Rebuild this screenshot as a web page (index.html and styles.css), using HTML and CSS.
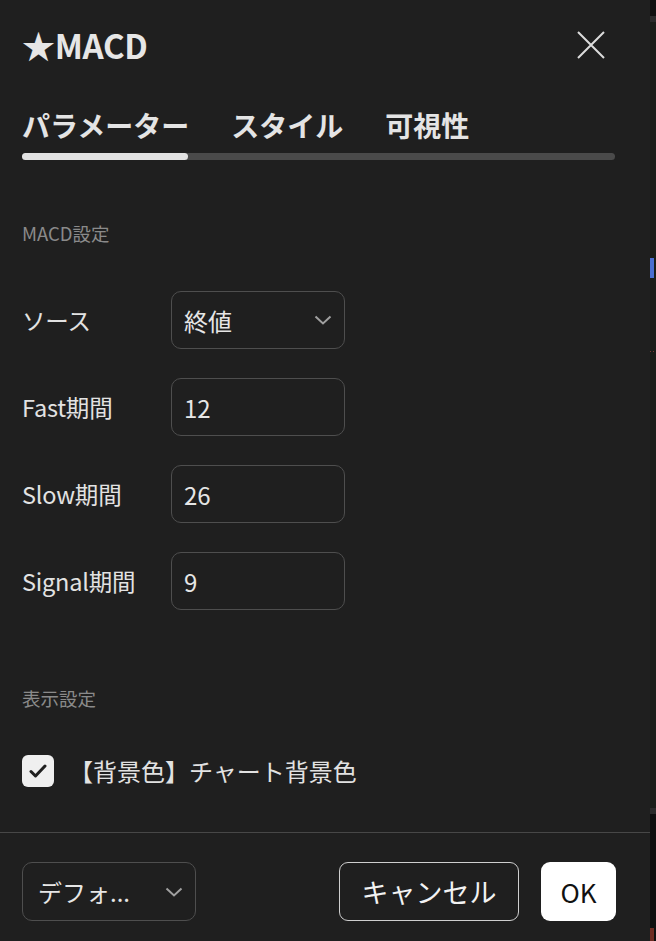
FILE: index.html
```html
<!DOCTYPE html>
<html lang="ja">
<head>
<meta charset="utf-8">
<title>MACD</title>
<link rel="stylesheet" href="styles.css">
</head>
<body>
<div class="dialog">
  <div class="main">
    <header class="header">
      <h1 class="title">★MACD</h1>
      <button class="close" aria-label="閉じる">
        <svg width="30" height="30" viewBox="0 0 30 30"><path d="M2 2 L28 28 M28 2 L2 28" stroke="#dcdcdc" stroke-width="2" fill="none"/></svg>
      </button>
    </header>
    <nav class="tabs">
      <span class="tab">パラメーター</span>
      <span class="tab">スタイル</span>
      <span class="tab">可視性</span>
    </nav>
    <div class="track"><div class="track-fill"></div></div>

    <div class="section-label">MACD設定</div>
    <div class="rows">
      <div class="row">
        <span class="label">ソース</span>
        <div class="field select"><span>終値</span>
          <svg class="chev" width="18" height="10" viewBox="0 0 18 10"><path d="M1.5 1.5 L9 8.5 L16.5 1.5" stroke="#a0a0a0" stroke-width="2" fill="none"/></svg>
        </div>
      </div>
      <div class="row">
        <span class="label">Fast期間</span>
        <div class="field">12</div>
      </div>
      <div class="row">
        <span class="label">Slow期間</span>
        <div class="field">26</div>
      </div>
      <div class="row">
        <span class="label">Signal期間</span>
        <div class="field">9</div>
      </div>
    </div>

    <div class="section-label second">表示設定</div>
    <div class="check-row">
      <span class="checkbox">
        <svg width="18" height="14" viewBox="0 0 18 14"><path d="M2 7.5 L6.5 12 L16 2" stroke="#1f1f1f" stroke-width="3" fill="none" stroke-linecap="round" stroke-linejoin="round"/></svg>
      </span>
      <span class="check-label">【背景色】チャート背景色</span>
    </div>
  </div>
  <div class="divider"></div>
  <footer class="footer">
    <div class="field select preset"><span>デフォ...</span>
      <svg class="chev" width="18" height="10" viewBox="0 0 18 10"><path d="M1.5 1.5 L9 8.5 L16.5 1.5" stroke="#a0a0a0" stroke-width="2" fill="none"/></svg>
    </div>
    <div class="actions">
      <button class="btn cancel">キャンセル</button>
      <button class="btn ok">OK</button>
    </div>
  </footer>
</div>
<div class="edge">
  <div class="e-top"></div>
  <div class="e-band"></div>
  <div class="e-chart">
    <div class="e-blue"></div>
    <div class="e-dots"></div>
  </div>
  <div class="e-band"></div>
  <div class="e-bottom"><div class="e-red"></div></div>
</div>
</body>
</html>
```

FILE: styles.css
```css
* { box-sizing: border-box; }
html, body { margin: 0; padding: 0; }
body {
  display: flex;
  width: 656px;
  height: 941px;
  overflow: hidden;
  background: #1f1f1f;
  font-family: "Noto Sans CJK JP", "Noto Sans", sans-serif;
  color: #e2e2e2;
}
.dialog {
  width: 650px;
  height: 941px;
  background: #1f1f1f;
  display: flex;
  flex-direction: column;
}
.main {
  padding: 0 35px 0 22px;
}
.header {
  height: 90px;
  display: flex;
  align-items: center;
  justify-content: space-between;
}
.title {
  margin: 0;
  font-size: 33px;
  font-weight: 700;
  line-height: 40px;
  color: #e6e6e6;
  letter-spacing: -0.3px;
}
.close {
  width: 30px;
  height: 30px;
  padding: 0;
  margin-right: 9px;
  border: none;
  background: none;
  display: flex;
}
.tabs {
  margin-top: 17px;
  display: flex;
  gap: 42px;
  height: 36px;
  align-items: center;
}
.tab {
  font-size: 28px;
  font-weight: 700;
  line-height: 36px;
  color: #e4e4e4;
}
.track {
  margin-top: 10px;
  height: 7px;
  border-radius: 4px;
  background: #4a4a4a;
}
.track-fill {
  width: 166px;
  height: 7px;
  border-radius: 4px;
  background: #e2e2e2;
}
.section-label {
  margin-top: 61px;
  font-size: 18.5px;
  line-height: 24px;
  color: #8a8a8a;
}
.section-label.second {
  margin-top: 76px;
}
.rows {
  margin-top: 46px;
  display: flex;
  flex-direction: column;
  gap: 29px;
}
.row {
  display: flex;
  align-items: center;
  height: 58px;
}
.label {
  width: 149px;
  font-size: 23.5px;
  line-height: 30px;
  color: #e2e2e2;
  letter-spacing: -0.2px;
}
.field {
  width: 174px;
  height: 58px;
  border: 1px solid #4e4e4e;
  border-radius: 10px;
  padding: 0 12px 0 12px;
  display: flex;
  align-items: center;
  font-size: 24px;
  color: #e6e6e6;
}
.select {
  justify-content: space-between;
}
.chev {
  display: block;
}
.check-row {
  margin-top: 45px;
  display: flex;
  align-items: center;
  gap: 15px;
  height: 32px;
}
.checkbox {
  width: 32px;
  height: 32px;
  border-radius: 6px;
  background: #efefef;
  display: flex;
  align-items: center;
  justify-content: center;
}
.check-label {
  font-size: 24px;
  line-height: 30px;
  color: #e2e2e2;
}
.divider {
  margin-top: 45px;
  height: 1px;
  background: #474747;
}
.footer {
  margin-top: 29px;
  padding: 0 34px 0 22px;
  display: flex;
  justify-content: space-between;
  align-items: center;
}
.preset {
  height: 59px;
  padding: 0 12px 0 15px;
}
.actions {
  display: flex;
  gap: 22px;
}
.btn {
  height: 59px;
  border-radius: 9px;
  font-family: "Noto Sans CJK JP", "Noto Sans", sans-serif;
  font-size: 27px;
  line-height: 1;
  padding: 0;
  display: flex;
  align-items: center;
  justify-content: center;
}
.cancel {
  width: 180px;
  background: #1f1f1f;
  border: 1px solid #cfcfcf;
  color: #f2f2f2;
}
.ok {
  width: 75px;
  background: #ffffff;
  border: none;
  color: #111111;
  font-size: 26px;
}
.edge {
  width: 6px;
  height: 941px;
  display: flex;
  flex-direction: column;
  background: #1a1d19;
}
.e-top { height: 16px; background: #101010; }
.e-band { height: 6px; background: #2b2b2b; }
.e-chart {
  height: 786px;
  background: #1a1e19;
  padding-top: 236px;
}
.e-blue { width: 4px; height: 20px; background: #4a6fd0; }
.e-dots { margin-top: 73px; width: 6px; height: 1px; background: repeating-linear-gradient(90deg, #7a3a3a 0 1px, transparent 1px 3px); }
.e-bottom {
  flex: 1;
  background: #0f0f0f;
  display: flex;
  flex-direction: column;
  justify-content: flex-end;
}
.e-red { width: 4px; height: 13px; background: #6e2c22; }
```
